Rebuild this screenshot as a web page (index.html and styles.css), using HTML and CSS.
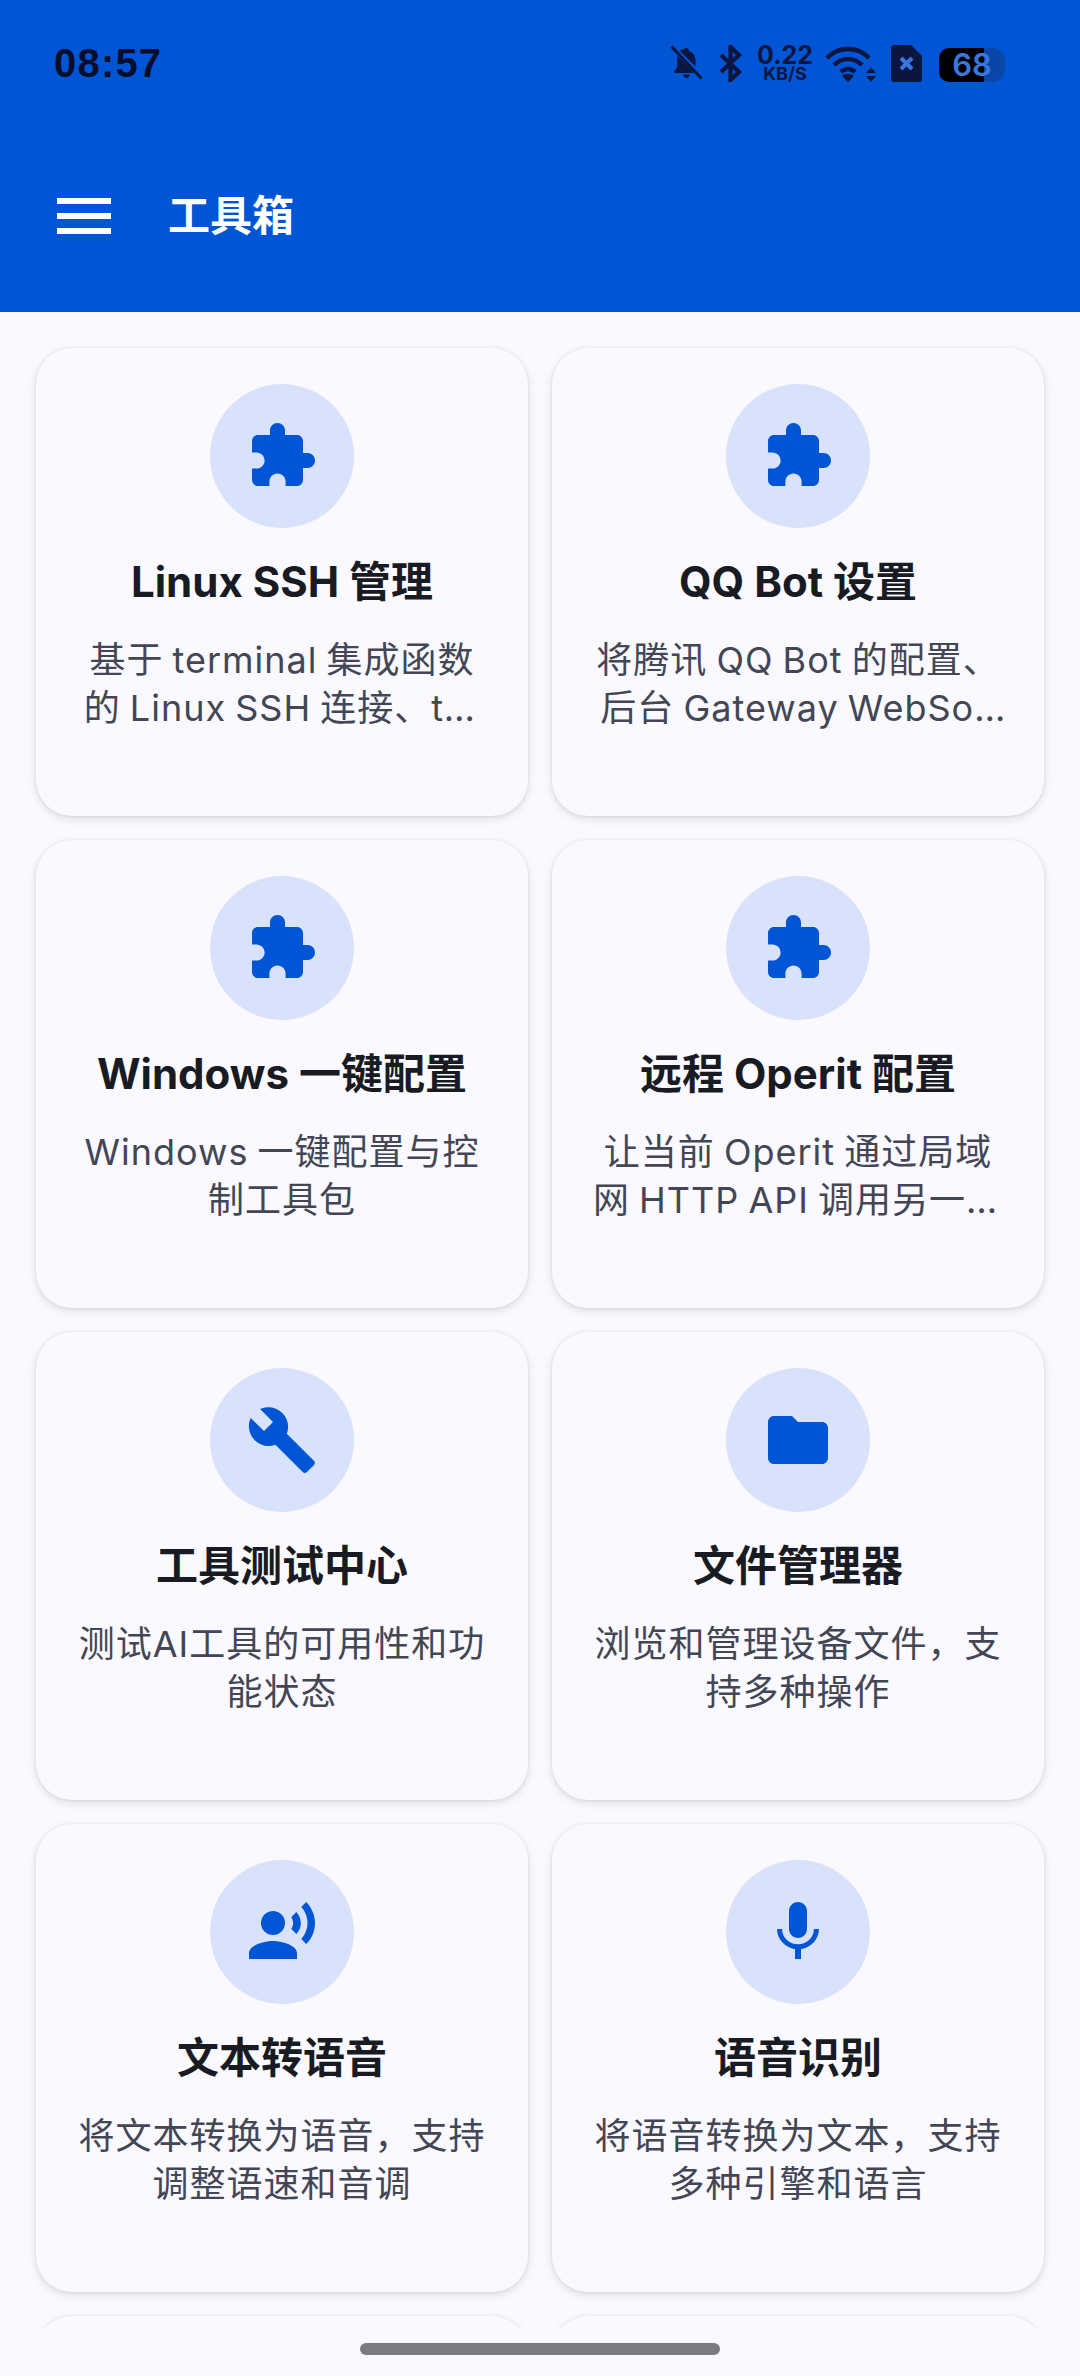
FILE: index.html
```html
<!DOCTYPE html>
<html lang="zh-CN">
<head>
  <meta charset="UTF-8">
  <meta name="viewport" content="width=device-width, initial-scale=1.0">
  <title>工具箱</title>
  <link rel="stylesheet" href="styles.css">
</head>
<body>
  <svg class="defs" width="0" height="0">
    <defs>
      <symbol id="i-ext" viewBox="0 0 24 24"><path d="M20.5 11H19V7c0-1.1-.9-2-2-2h-4V3.5C13 2.12 11.88 1 10.5 1S8 2.12 8 3.5V5H4c-1.1 0-1.99.9-1.99 2v3.8H3.5c1.49 0 2.7 1.21 2.7 2.7s-1.21 2.7-2.7 2.7H2V20c0 1.1.9 2 2 2h3.8v-1.5c0-1.49 1.21-2.7 2.7-2.7 1.49 0 2.7 1.21 2.7 2.7V22H17c1.1 0 2-.9 2-2v-4h1.5c1.38 0 2.5-1.12 2.5-2.5S21.88 11 20.5 11z"/></symbol>
    </defs>
  </svg>

  <header class="app-header">
    <div class="status-bar">
      <span class="clock">08:57</span>
      <div class="status-icons">
        <svg class="st-bell" viewBox="0 0 33 35"><path d="M16.500 3c1.400 0 2.400 1 2.400 2.300v1c4.300 1 6.600 4.700 6.600 9v6.200L9.700 5.800c.9-.9 2.100-1.400 3.300-1.600l1.100-.1v-.1c0-.6 1-1 2.400-1zM7.300 10.600l17.200 17.400H4.200v-2.200l3-3v-7.500c0-1.700 0-3.300.1-4.700zM13 29.500h7c0 1.900-1.600 3.500-3.500 3.500S13 31.400 13 29.500z"/><path d="M1.500 1.500l30 32" stroke="#0a1640" stroke-width="3" fill="none"/></svg>
        <svg class="st-bt" viewBox="0 0 24 37"><path d="M2 10l18 17-8.500 8V2l8.500 8L2 27" fill="none" stroke="#0a1640" stroke-width="4.200"/></svg>
        <div class="net-speed">
          <span class="net-val">0.22</span>
          <span class="net-unit">KB/S</span>
        </div>
        <svg class="st-wifi" viewBox="0 0 52 37"><path d="M2 13C13 1 33 1 44 13M9 20c8-8 20-8 28 0M16 27c4-4 10-4 14 0" fill="none" stroke="#0a1640" stroke-width="4.500"/><path d="M23 37l-6-6c3-3 9-3 12 0zM46 22l5 6H41zM46 37l5-6H41z"/></svg>
        <svg class="st-sim" viewBox="0 0 31 37"><path d="M3 0h17l11 11v23c0 1.700-1.300 3-3 3H3c-1.700 0-3-1.300-3-3V3c0-1.700 1.300-3 3-3z"/><path d="M10 13l11 11M21 13L10 24" stroke="#3a77dc" stroke-width="4" fill="none"/></svg>
        <div class="battery">
          <span class="battery-num">68</span>
        </div>
      </div>
    </div>
    <div class="toolbar">
      <button class="menu-btn" aria-label="菜单">
        <svg viewBox="0 0 24 24"><path d="M3 18h18v-2H3v2zm0-5h18v-2H3v2zm0-7v2h18V6H3z"/></svg>
      </button>
      <h1 class="page-title">工具箱</h1>
    </div>
  </header>

  <main class="tool-list">
    <div class="tool-grid">
      <div class="tool-card">
        <div class="tool-icon"><svg viewBox="0 0 24 24"><use href="#i-ext"/></svg></div>
        <h2 class="tool-name">Linux SSH 管理</h2>
        <p class="tool-desc">基于 terminal 集成函数的 Linux SSH 连接、terminal 会话管理工具包</p>
      </div>
      <div class="tool-card">
        <div class="tool-icon"><svg viewBox="0 0 24 24"><use href="#i-ext"/></svg></div>
        <h2 class="tool-name">QQ Bot 设置</h2>
        <p class="tool-desc">将腾讯 QQ Bot 的配置、后台 Gateway WebSocket 服务与消息收发整合</p>
      </div>
      <div class="tool-card">
        <div class="tool-icon"><svg viewBox="0 0 24 24"><use href="#i-ext"/></svg></div>
        <h2 class="tool-name">Windows 一键配置</h2>
        <p class="tool-desc">Windows 一键配置与控制工具包</p>
      </div>
      <div class="tool-card">
        <div class="tool-icon"><svg viewBox="0 0 24 24"><use href="#i-ext"/></svg></div>
        <h2 class="tool-name">远程 Operit 配置</h2>
        <p class="tool-desc">让当前 Operit 通过局域网 HTTP API 调用另一台设备上的 Operit 工具</p>
      </div>
      <div class="tool-card">
        <div class="tool-icon"><svg viewBox="0 0 24 24"><path d="M22.7 19l-9.100-9.100c.9-2.300.4-5-1.500-6.900-2-2-5-2.400-7.400-1.300L9 6 6 9 1.600 4.700C.4 7.100.9 10.100 2.900 12.100c1.900 1.900 4.600 2.400 6.900 1.500l9.100 9.100c.4.4 1 .4 1.400 0l2.300-2.300c.5-.4.5-1.100.1-1.400z"/></svg></div>
        <h2 class="tool-name">工具测试中心</h2>
        <p class="tool-desc">测试AI工具的可用性和功能状态</p>
      </div>
      <div class="tool-card">
        <div class="tool-icon"><svg viewBox="0 0 24 24"><path d="M10 4H4c-1.100 0-1.990.9-1.990 2L2 18c0 1.100.9 2 2 2h16c1.100 0 2-.9 2-2V8c0-1.100-.9-2-2-2h-8l-2-2z"/></svg></div>
        <h2 class="tool-name">文件管理器</h2>
        <p class="tool-desc">浏览和管理设备文件，支持多种操作</p>
      </div>
      <div class="tool-card">
        <div class="tool-icon"><svg viewBox="0 0 24 24"><circle cx="9" cy="9" r="4"/><path d="M9 15c-2.670 0-8 1.340-8 4v2h16v-2c0-2.660-5.330-4-8-4zm7.760-9.640l-1.680 1.690c.84 1.180.84 2.710 0 3.890l1.680 1.690c2.020-2.020 2.020-5.070 0-7.270zM20.070 2l-1.630 1.630c2.770 3.020 2.770 7.560 0 10.740L20.070 16c3.900-3.890 3.910-9.950 0-14z"/></svg></div>
        <h2 class="tool-name">文本转语音</h2>
        <p class="tool-desc">将文本转换为语音，支持调整语速和音调</p>
      </div>
      <div class="tool-card">
        <div class="tool-icon"><svg viewBox="0 0 24 24"><path d="M12 14c1.660 0 2.990-1.340 2.990-3L15 5c0-1.660-1.340-3-3-3S9 3.340 9 5v6c0 1.660 1.340 3 3 3zm5.300-3c0 3-2.540 5.100-5.300 5.100S6.700 14 6.700 11H5c0 3.410 2.720 6.230 6 6.720V21h2v-3.280c3.280-.48 6-3.300 6-6.720h-1.700z"/></svg></div>
        <h2 class="tool-name">语音识别</h2>
        <p class="tool-desc">将语音转换为文本，支持多种引擎和语言</p>
      </div>
      <div class="tool-card"></div>
      <div class="tool-card"></div>
    </div>
  </main>

  <div class="nav-area">
    <div class="nav-handle"></div>
  </div>
</body>
</html>
```

FILE: styles.css
```css
* {
  box-sizing: border-box;
}
html, body {
  margin: 0;
  height: 2376px;
  overflow: hidden;
}
body {
  display: flex;
  flex-direction: column;
  font-family: Inter, "Noto Sans CJK SC", sans-serif;
  background-color: #f9f9ff;
  color: #191b23;
}
.defs {
  position: absolute;
}

/* header */
.app-header {
  flex: none;
  height: 312px;
  background-color: #0055d4;
}
.status-bar {
  height: 120px;
  padding: 45px 75px 0 54px;
  display: flex;
  justify-content: space-between;
  align-items: flex-start;
  color: #0a1640;
}
.status-bar svg {
  display: block;
  fill: #0a1640;
}
.clock {
  font-family: "Liberation Sans", sans-serif;
  font-size: 40px;
  line-height: 37px;
  font-weight: 700;
  letter-spacing: 1.2px;
  color: #060e2c;
}
.status-icons {
  display: flex;
  align-items: flex-start;
}
.st-bell {
  width: 33px;
  height: 35px;
}
.st-bt {
  width: 24px;
  height: 37px;
  margin-left: 16px;
}
.net-speed {
  width: 56px;
  margin-left: 14px;
  display: flex;
  flex-direction: column;
  align-items: center;
  font-weight: 700;
}
.net-val {
  font-size: 25px;
  line-height: 21px;
}
.net-unit {
  font-size: 18px;
  line-height: 16px;
}
.st-wifi {
  width: 52px;
  height: 37px;
  margin-left: 12px;
}
.st-sim {
  width: 31px;
  height: 37px;
  margin-left: 14px;
}
.battery {
  width: 66px;
  height: 34px;
  margin: 3px 0 0 17px;
  border-radius: 10px 13px 13px 10px;
  background: linear-gradient(to right, #000 45px, #0a46a8 45px);
  text-align: center;
}
.battery-num {
  font-size: 31px;
  line-height: 34px;
  font-weight: 600;
  color: #3a77dc;
}
.toolbar {
  height: 192px;
  padding-left: 48px;
  display: flex;
  align-items: center;
}
.menu-btn {
  width: 72px;
  height: 72px;
  padding: 0;
  border: none;
  background: none;
}
.menu-btn svg {
  display: block;
  width: 72px;
  height: 72px;
  fill: #fff;
}
.page-title {
  margin: 0 0 0 48px;
  font-size: 42px;
  line-height: 56px;
  font-weight: 700;
  color: #fff;
}

/* cards */
.tool-list {
  height: 2016px;
  overflow: hidden;
  flex: none;
}
.tool-grid {
  padding: 36px;
  display: grid;
  grid-template-columns: 492px 492px;
  grid-auto-rows: 468px;
  gap: 24px;
}
.tool-card {
  padding: 36px 40px 0;
  display: flex;
  flex-direction: column;
  align-items: center;
  border-radius: 36px;
  background-color: #f9f9ff;
  box-shadow: 0 3px 9px rgba(0, 0, 0, 0.12), 0 0 3px rgba(0, 0, 0, 0.08);
}
.tool-icon {
  width: 144px;
  height: 144px;
  border-radius: 50%;
  background-color: #d9e2fb;
  display: flex;
  align-items: center;
  justify-content: center;
}
.tool-icon svg {
  width: 72px;
  height: 72px;
  fill: #0055d4;
}
.tool-name {
  margin: 24px 0 0;
  font-size: 42px;
  line-height: 60px;
  font-weight: 700;
  text-align: center;
  color: #191b23;
}
.tool-desc {
  margin: 24px 0 0;
  width: 100%;
  font-size: 36px;
  line-height: 48px;
  letter-spacing: 1px;
  word-spacing: -2px;
  word-break: break-all;
  text-align: center;
  color: #434654;
  display: -webkit-box;
  -webkit-box-orient: vertical;
  -webkit-line-clamp: 2;
  overflow: hidden;
}

/* gesture bar */
.nav-area {
  flex: 1;
  padding-top: 15px;
  background-color: #f9f9ff;
}
.nav-handle {
  width: 360px;
  height: 12px;
  margin: 0 auto;
  border-radius: 6px;
  background-color: #7b7b80;
}
```
